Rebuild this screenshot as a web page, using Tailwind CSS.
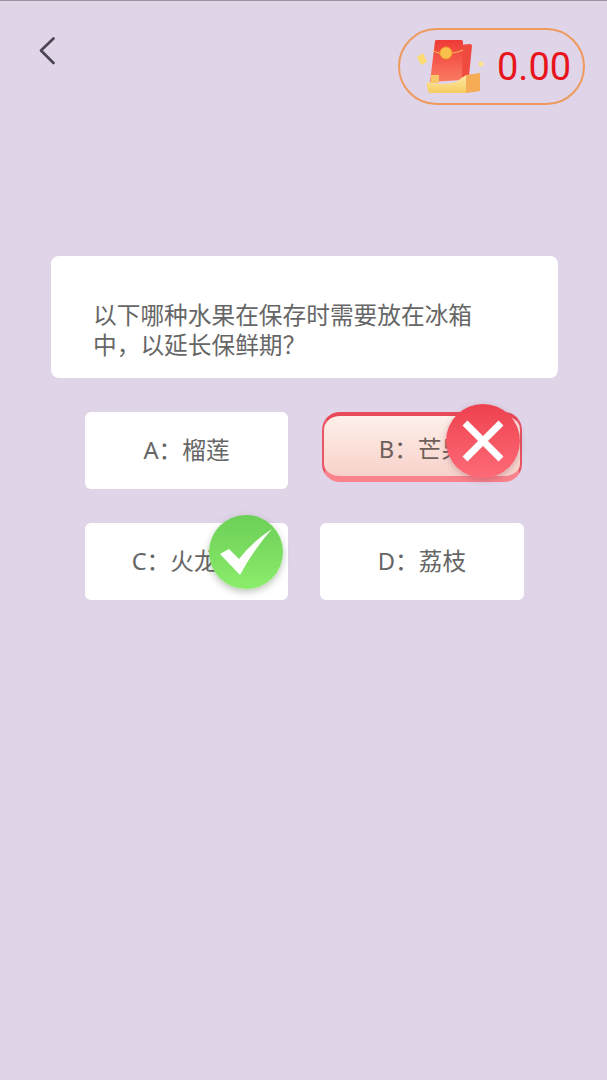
<!DOCTYPE html>
<html lang="zh-CN">
<head>
<meta charset="UTF-8">
<meta name="viewport" content="width=device-width, initial-scale=1.0">
<title>答题</title>
<script src="https://cdn.jsdelivr.net/npm/@tailwindcss/browser@4"></script>
</head>
<body class="bg-[#e0d4e8]">
<div class="w-[607px] h-[1080px] overflow-hidden border-t border-[#9c95a0] font-['Noto_Sans','Noto_Sans_CJK_SC',sans-serif] text-[#666666]">

  <!-- top bar -->
  <div class="flex items-start justify-between pt-[27px] pl-[38px] pr-[22px] h-[255px]">
    <svg class="mt-[9px]" width="20" height="28" viewBox="0 0 20 28" fill="none">
      <path d="M15.5 1.5 L3 13.5 L15.5 26" stroke="#4a4550" stroke-width="2.6" stroke-linecap="round" stroke-linejoin="round"/>
    </svg>
    <div class="flex items-center w-[187px] h-[77px] rounded-full border-2 border-[#ee9a5d] pl-[16px]">
      <svg class="overflow-visible" width="68" height="62" viewBox="0 0 68 62">
        <defs>
          <linearGradient id="env" x1="0" y1="0" x2="0" y2="1"><stop offset="0" stop-color="#ee3a36"/><stop offset="1" stop-color="#fb7b62"/></linearGradient>
          <linearGradient id="base" x1="0" y1="0" x2="0" y2="1"><stop offset="0" stop-color="#fdeaa6"/><stop offset="1" stop-color="#f6cb62"/></linearGradient>
        </defs>
        <path d="M44 9 L54 8 Q56 8 56 10 L53 40 L44 42 Z" fill="#ee4a3e"/>
        <path d="M19 5 Q19 4 21 4 L45 4 Q47 4 47 6 L46 44 L14 46 Z" fill="url(#env)"/>
        <path d="M17 15 Q30 21 47 14" stroke="#f7b25a" stroke-width="1.2" fill="none"/>
        <circle cx="30" cy="17" r="6" fill="#f9c04e" stroke="#f59a2e"/>
        <path d="M1 21 L7 17 L11 26 L5 29 Z" fill="#fbdc72"/>
        <circle cx="65" cy="28" r="2.5" fill="#fde38a"/>
        <rect x="15" y="39" width="8" height="8" fill="#f8c868"/>
        <path d="M11 46 Q25 50 40 46 L50 39 L50 57 L13 57 Q10 52 11 46 Z" fill="url(#base)"/>
        <path d="M50 39 L64 37 L64 55 L50 57 Z" fill="#f6ab55"/>
      </svg>
      <span class="ml-[13px] font-['Roboto',sans-serif] text-[38px] leading-none text-[#e8141c]">0.00</span>
    </div>
  </div>

  <!-- question -->
  <div class="ml-[51px] w-[507px] h-[122px] rounded-[8px] bg-white pt-[44px] pl-[42px] pr-[82px] text-[23.7px] leading-[30px] text-[#666666]">
    以下哪种水果在保存时需要放在冰箱中，以延长保鲜期？
  </div>

  <!-- options -->
  <div class="mt-[34px] ml-[85px] w-[439px] grid grid-cols-[203px_204px] gap-x-[32px] gap-y-[34px] text-[23.7px]">
    <div class="flex h-[77px] items-center justify-center rounded-[6px] bg-white">A：榴莲</div>

    <div class="relative ml-[2px] w-[200px] h-[70px] rounded-[18px] border-x-2 border-t-[4px] border-b-[6px] border-x-[#ea5566] border-t-[#e84a58] border-b-[#fa828c] bg-gradient-to-b from-[#fdf0ea] to-[#f7d2ca] flex items-center justify-center pt-[7px] text-[#6f5f5a]">
      B：芒果
      <div class="absolute right-[0px] top-[-12px] flex size-[74px] items-center justify-center rounded-full bg-gradient-to-b from-[#ee404e] to-[#fd6a78] shadow-[0_2px_6px_rgba(120,40,60,0.3)]">
        <svg width="46" height="46" viewBox="0 0 46 46"><path d="M5 5 L41 41 M41 5 L5 41" stroke="#ffffff" stroke-width="7"/></svg>
      </div>
    </div>

    <div class="relative flex h-[77px] items-center justify-center rounded-[6px] bg-white">
      C：火龙果
      <div class="absolute right-[5px] top-[-8px] flex size-[74px] items-center justify-center rounded-full bg-gradient-to-b from-[#6ccf57] to-[#8aed6b] shadow-[0_3px_7px_rgba(60,90,50,0.35)]">
        <svg width="54" height="46" viewBox="0 0 54 46"><path d="M1 25 L10 20 L20 30 Q34 12 53 0 Q35 20 21 46 Z" fill="#ffffff"/></svg>
      </div>
    </div>

    <div class="flex h-[77px] items-center justify-center rounded-[6px] bg-white">D：荔枝</div>
  </div>
</div>
</body>
</html>
